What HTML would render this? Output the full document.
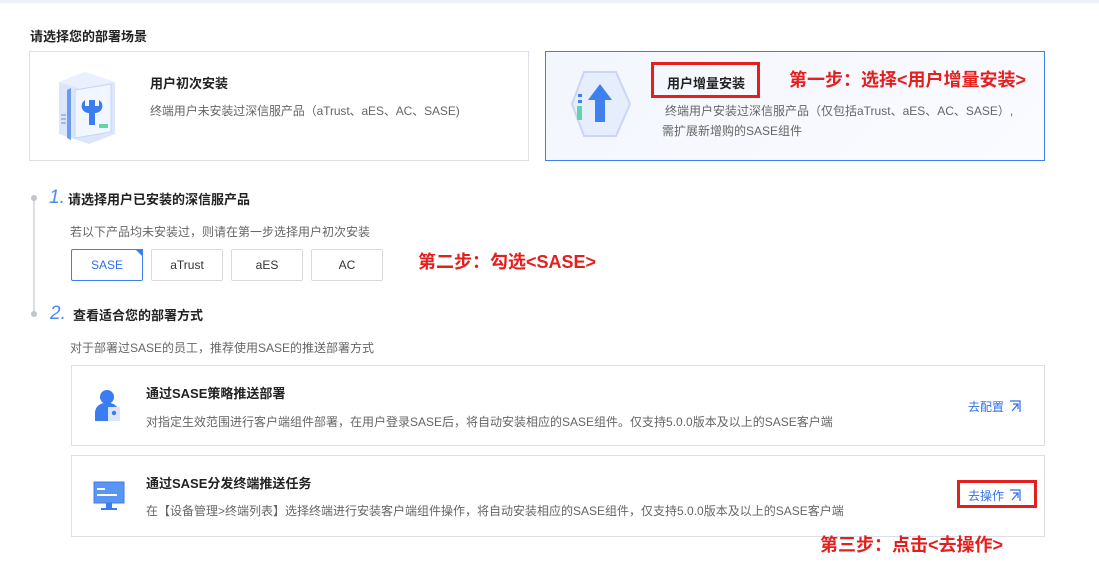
<!DOCTYPE html>
<html><head><meta charset="utf-8"><style>
*{margin:0;padding:0;box-sizing:border-box}
body{width:1099px;height:582px;background:#fff;position:relative;overflow:hidden;font-family:"Liberation Sans","Noto Sans CJK SC",sans-serif;color:#222}
.a{position:absolute;white-space:nowrap}
.t13{font-size:13px;font-weight:bold;color:#222}
.g12{font-size:12px;color:#666}
.red{color:#e4201f;font-weight:bold;font-size:18px}
.card{position:absolute;border:1px solid #dcdfe6;background:#fff}
.btn{position:absolute;top:249px;width:72px;height:32px;border:1px solid #d6d9e0;font-size:12px;text-align:center;line-height:30px;color:#333;border-radius:2px}
.lnk{font-size:12px;color:#2f6fe8}
</style></head><body>
<div class="a" style="left:0;top:0;width:1099px;height:3px;background:#edf0f5"></div>
<div class="a t13" style="left:30px;top:26px">请选择您的部署场景</div>

<div class="card" style="left:29px;top:51px;width:500px;height:110px"></div>
<svg class="a" style="left:55px;top:70px" width="64" height="76" viewBox="0 0 64 76">
<polygon points="4,12 30,2 60,12 60,64 34,74 4,64" fill="#dbe6fb"/>
<polygon points="4,12 30,2 60,12 34,22" fill="#eaf0fd"/>
<polygon points="12,20 16,18 16,70 12,68" fill="#6c9af0"/>
<polygon points="20,20 56,14 56,62 20,68" fill="#f2f6fe" stroke="#c5d5f5"/>
<path d="M30 30 a7 7 0 0 0 4 13 v12 h6 v-12 a7 7 0 0 0 4 -13 v6 h-4 v-6 h-6 v6 h-4z" fill="#3b7cf0"/>
<rect x="44" y="54" width="9" height="4" fill="#5ed6a8"/>
<rect x="6" y="44" width="5" height="2" fill="#9fbaf0"/><rect x="6" y="48" width="5" height="2" fill="#9fbaf0"/><rect x="6" y="52" width="5" height="2" fill="#9fbaf0"/>
</svg>
<div class="a t13" style="left:150px;top:73px">用户初次安装</div>
<div class="a g12" style="left:150px;top:102px;letter-spacing:-0.1px">终端用户未安装过深信服产品（aTrust、aES、AC、SASE)</div>

<div class="card" style="left:545px;top:51px;width:500px;height:110px;border-color:#3d7ef0;background:linear-gradient(135deg,#f3f6fd,#fafbff)"></div>
<svg class="a" style="left:570px;top:70px" width="62" height="70" viewBox="0 0 62 70">
<polygon points="14,2 46,2 60,34 46,66 14,66 2,34" fill="#e6edfb" stroke="#c9d7f4" stroke-width="2"/>
<polygon points="30,14 42,30 35,30 35,52 25,52 25,30 18,30" fill="#3f80ef"/>
<rect x="8" y="24" width="4" height="3" fill="#3f80ef"/><rect x="8" y="30" width="4" height="3" fill="#3f80ef"/>
<rect x="7" y="36" width="5" height="14" fill="#5ed6a8"/>
</svg>
<div class="a" style="left:651px;top:62px;width:109px;height:36px;border:3px solid #e4201f"></div>
<div class="a t13" style="left:667px;top:73px">用户增量安装</div>
<div class="a red" style="left:789px;top:66px">第一步：选择&lt;用户增量安装&gt;</div>
<div class="a g12" style="left:665px;top:102px">终端用户安装过深信服产品（仅包括aTrust、aES、AC、SASE）,</div>
<div class="a g12" style="left:662px;top:122px">需扩展新增购的SASE组件</div>

<div class="a" style="left:33px;top:197px;width:2px;height:118px;background:#dcdfe6"></div>
<div class="a" style="left:31px;top:195px;width:6px;height:6px;border-radius:3px;background:#c0c4cc"></div>
<div class="a" style="left:31px;top:311px;width:6px;height:6px;border-radius:3px;background:#c0c4cc"></div>
<div class="a" style="left:49px;top:187px;font-size:19px;font-style:italic;color:#4b8af0">1.</div>
<div class="a t13" style="left:68px;top:189px">请选择用户已安装的深信服产品</div>
<div class="a g12" style="left:70px;top:223px">若以下产品均未安装过，则请在第一步选择用户初次安装</div>
<div class="btn" style="left:71px;border-color:#3d7ef0;color:#2f6fe8">SASE<div style="position:absolute;right:-1px;top:-1px;width:0;height:0;border-left:8px solid transparent;border-top:8px solid #3d7ef0"></div></div>
<div class="btn" style="left:151px">aTrust</div>
<div class="btn" style="left:231px">aES</div>
<div class="btn" style="left:311px">AC</div>
<div class="a red" style="left:418px;top:248px">第二步：勾选&lt;SASE&gt;</div>

<div class="a" style="left:50px;top:303px;font-size:19px;font-style:italic;color:#4b8af0">2.</div>
<div class="a t13" style="left:73px;top:305px">查看适合您的部署方式</div>
<div class="a g12" style="left:70px;top:339px">对于部署过SASE的员工，推荐使用SASE的推送部署方式</div>

<div class="card" style="left:71px;top:365px;width:974px;height:81px"></div>
<svg class="a" style="left:94px;top:389px" width="30" height="32" viewBox="0 0 30 32">
<circle cx="13" cy="8" r="7" fill="#3b7cf0"/><path d="M1 32 v-9 a10 10 0 0 1 10 -9 h4 a10 10 0 0 1 10 9 v9z" fill="#3b7cf0"/>
<rect x="14" y="18" width="12" height="14" fill="#dbe6fb"/><circle cx="20" cy="24" r="2.2" fill="#3b7cf0"/>
</svg>
<div class="a t13" style="left:146px;top:383px">通过SASE策略推送部署</div>
<div class="a g12" style="left:146px;top:413px">对指定生效范围进行客户端组件部署，在用户登录SASE后，将自动安装相应的SASE组件。仅支持5.0.0版本及以上的SASE客户端</div>
<div class="a lnk" style="left:968px;top:398px">去配置</div>
<svg class="a" style="left:1009px;top:400px" width="12" height="13" viewBox="0 0 12 13"><path d="M1 1h10v11M4 4h5v5M9 4L3 11" fill="none" stroke="#2f6fe8" stroke-width="1.2"/></svg>

<div class="card" style="left:71px;top:455px;width:974px;height:82px"></div>
<svg class="a" style="left:93px;top:481px" width="32" height="30" viewBox="0 0 32 30">
<rect x="1" y="1" width="30" height="21" fill="#5b95f3" stroke="#3b7cf0"/><rect x="4" y="7" width="8" height="2" fill="#fff"/><rect x="4" y="13" width="20" height="2" fill="#fff"/>
<rect x="13" y="22" width="6" height="5" fill="#3b7cf0"/><rect x="8" y="27" width="16" height="2" fill="#3b7cf0"/>
</svg>
<div class="a t13" style="left:146px;top:473px">通过SASE分发终端推送任务</div>
<div class="a g12" style="left:146px;top:502px">在【设备管理&gt;终端列表】选择终端进行安装客户端组件操作，将自动安装相应的SASE组件，仅支持5.0.0版本及以上的SASE客户端</div>
<div class="a" style="left:957px;top:480px;width:80px;height:28px;border:3px solid #e4201f"></div>
<div class="a lnk" style="left:968px;top:487px">去操作</div>
<svg class="a" style="left:1009px;top:489px" width="12" height="13" viewBox="0 0 12 13"><path d="M1 1h10v11M4 4h5v5M9 4L3 11" fill="none" stroke="#2f6fe8" stroke-width="1.2"/></svg>
<div class="a red" style="left:820px;top:531px">第三步：点击&lt;去操作&gt;</div>
</body></html>
